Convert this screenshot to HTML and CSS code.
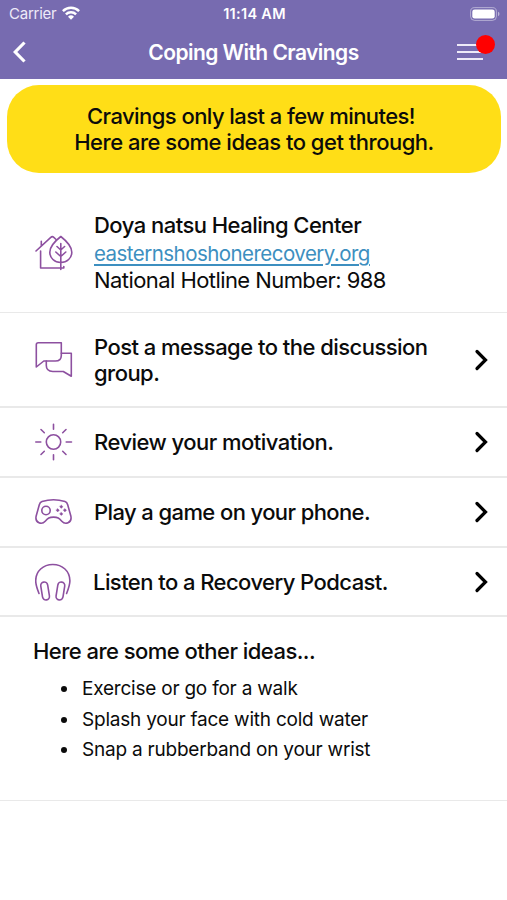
FILE: index.html
```html
<!DOCTYPE html>
<html lang="en">
<head>
    <meta charset="UTF-8">
    <meta name="viewport" content="width=device-width, initial-scale=1.0">
    <title>Coping With Cravings</title>
    <link rel="stylesheet" href="styles.css">
</head>
<body>
    <header class="top">
        <div class="status-bar">
            <div class="carrier">
                <span>Carrier</span>
                <svg class="wifi" width="18" height="14" viewBox="0 0 18 14" fill="none" stroke="#fff" stroke-width="2.5">
                    <path d="M.9 5.1a11.7 11.7 0 0 1 16.2 0M3.9 8.4a7.4 7.4 0 0 1 10.2 0"/>
                    <path d="M9 13.8 6 10.8a4.3 4.3 0 0 1 6 0z" fill="#fff" stroke="none"/>
                </svg>
            </div>
            <div class="time">11:14 AM</div>
            <svg class="battery" width="30" height="14" viewBox="0 0 30 14">
                <rect x=".6" y=".6" width="25.8" height="12.8" rx="4" fill="none" stroke="#fff" stroke-opacity=".45"/>
                <rect x="2.3" y="2.4" width="22.4" height="9.2" rx="2.4" fill="#fff"/>
                <path d="M28 4.8q1.5.6 1.5 2.2T28 9.2z" fill="#fff" fill-opacity=".5"/>
            </svg>
        </div>
        <div class="nav-bar">
            <svg class="back" width="13" height="22" viewBox="0 0 13 22" fill="none" stroke="#fff" stroke-width="3.2">
                <path d="M11.5 1.5 2.2 11l9.3 9.5"/>
            </svg>
            <h1 class="title">Coping With Cravings</h1>
            <div class="menu">
                <span class="menu-line"></span>
                <span class="menu-line"></span>
                <span class="menu-line"></span>
                <span class="menu-dot"></span>
            </div>
        </div>
    </header>

    <div class="banner">
        <div class="banner-first">Cravings only last a few minutes!</div>
        <div class="banner-second">Here are some ideas to get through.</div>
    </div>

    <div class="row row-center">
        <svg class="icon" width="38" height="38" viewBox="0 0 38 38">
            <path d="M1 17 15.8 3.3q1.5-1.4 3 0l2.3 2.2M6.300 11.500V7.200M5.600 17V34h23.200v-1.500"/>
            <path class="leaf" d="M25.8 2.5c-7 5.5-11 9.8-11 15.7 0 5.8 4.7 10.3 11 10.3s11-4.5 11-10.3c0-5.9-4-10.2-11-15.7zM25.8 9.5V35.500M22 12.500l3.800 3.500 3.800-3.500M20.800 18l5 4.500 5-4.500"/>
        </svg>
        <div class="row-text center-info">
            <div class="center-name">Doya natsu Healing Center</div>
            <a class="center-link" href="#">easternshoshonerecovery.org</a>
            <div class="center-phone">National Hotline Number: 988</div>
        </div>
    </div>

    <div class="row row-post">
        <svg class="icon" width="38" height="38" viewBox="0 0 38 38">
            <path d="M1.300 26V3.800q0-2 2-2h23v12.700q0 5.500-6 5.500H8.800z"/>
            <path d="M26.300 12.300h10v23l-8-4.800h-10.500q-6.500-.2-6.500-6v-4.500"/>
        </svg>
        <div class="row-text text-post">Post a message to the discussion<br>group.</div>
        <svg class="chevron" width="14" height="22" viewBox="0 0 14 22"><path d="M3 2.500 11.500 11 3 19.500"/></svg>
    </div>

    <div class="row">
        <svg class="icon" width="38" height="38" viewBox="0 0 38 38">
            <circle cx="18.500" cy="19" r="7.200"/>
            <path d="M18.500 1.200v5M18.500 31.800v5M.8 19h5M31.200 19h5.300M6 6.500l3.300 3.200M27.700 9.700 31 6.500M6 31.500l3.300-3.200M27.700 28.300l3.300 3.200"/>
        </svg>
        <div class="row-text text-review">Review your motivation.</div>
        <svg class="chevron" width="14" height="22" viewBox="0 0 14 22"><path d="M3 2.500 11.500 11 3 19.500"/></svg>
    </div>

    <div class="row">
        <svg class="icon" width="38" height="38" viewBox="0 0 38 38">
            <path d="M7 8.500q11.500-3.400 23 0 2 .6 2.700 3.300l3.200 11.500c1.300 7-5.900 8.500-9.100 4.900-2.800-3.100-4-4.100-8.300-4.100s-5.500 1-8.300 4.100C7 31.800-.2 30.300 1.100 23.300L4.300 11.800Q5 9.100 7 8.500z"/>
            <circle cx="11" cy="17.500" r="4.200"/>
            <path class="pad" d="M26.300 12l1.700 1.700-1.700 1.700-1.700-1.700zM26.300 19.200l1.700 1.700-1.700 1.700-1.700-1.700zM22.700 15.600l1.700 1.700-1.700 1.700-1.700-1.700zM29.900 15.600l1.700 1.700-1.700 1.700-1.700-1.700z"/>
        </svg>
        <div class="row-text text-game">Play a game on your phone.</div>
        <svg class="chevron" width="14" height="22" viewBox="0 0 14 22"><path d="M3 2.500 11.500 11 3 19.500"/></svg>
    </div>

    <div class="row row-podcast">
        <svg class="icon" width="38" height="38" viewBox="0 0 38 38">
            <path d="M4 30.500C2 25.500.7 21.500.7 17.800.7 8 8.200 1.500 17.800 1.500s17.100 6.500 17.100 16.300c0 3.700-1.300 7.700-3.300 12.700"/>
            <rect x="6.600" y="19" width="7" height="18" rx="3.500" transform="rotate(-9 10.100 28)"/>
            <rect x="21.900" y="19" width="7" height="18" rx="3.500" transform="rotate(9 25.400 28)"/>
        </svg>
        <div class="row-text text-podcast">Listen to a Recovery Podcast.</div>
        <svg class="chevron" width="14" height="22" viewBox="0 0 14 22"><path d="M3 2.500 11.500 11 3 19.500"/></svg>
    </div>

    <div class="ideas">
        <h2 class="ideas-title">Here are some other ideas...</h2>
        <ul class="ideas-list">
            <li>Exercise or go for a walk</li>
            <li>Splash your face with cold water</li>
            <li>Snap a rubberband on your wrist</li>
        </ul>
    </div>
</body>
</html>
```
FILE: styles.css
```css
*{
    box-sizing:border-box;
}
body{
    margin:0;
    background-color:#fff;
    color:#0b0b0b;
    font-family:Inter, "Liberation Sans", sans-serif;
    font-size:22px;
    font-weight:500;
    line-height:26px;
    letter-spacing:-0.53px;
}
.top{
    height:79px;
    background-color:#776bb0;
    color:#fff;
}
.status-bar{
    display:grid;
    grid-template-columns:1fr auto 1fr;
    align-items:center;
    height:27px;
    padding:0 7px 0 9px;
    font-size:15px;
    line-height:18px;
}
.carrier{
    display:flex;
    align-items:center;
    gap:6px;
    font-weight:400;
    letter-spacing:-0.25px;
    color:#eeeaf8;
}
.wifi{
    margin-top:-2px;
}
.time{
    font-size:14.5px;
    font-weight:600;
    letter-spacing:0.3px;
}
.battery{
    justify-self:end;
}
.nav-bar{
    display:flex;
    align-items:center;
    justify-content:space-between;
    height:50px;
    padding:0 24px 0 13px;
}
.title{
    margin:0 0 0 13px;
    padding:1px 0 0 11px;
    font-size:21px;
    font-weight:600;
    letter-spacing:-0.55px;
}
.menu{
    position:relative;
    display:flex;
    flex-direction:column;
    gap:5px;
    width:26px;
}
.menu-line{
    height:2px;
    background-color:#eeeaf8;
}
.menu-dot{
    position:absolute;
    top:-9px;
    right:-12px;
    width:19px;
    height:19px;
    border-radius:50%;
    background-color:#ff0000;
}
.banner{
    display:flex;
    flex-direction:column;
    align-items:center;
    justify-content:center;
    height:88px;
    margin:6px 6px 0 7px;
    border-radius:32px;
    background-color:#ffde17;
}
.banner-first{
    margin-right:6px;
    letter-spacing:-0.56px;
}
.banner-second{
    letter-spacing:-0.49px;
}
.row{
    display:flex;
    align-items:center;
    height:70px;
    padding:0 19px 0 35px;
    border-bottom:2px solid #e9e9e9;
}
.row-center{
    height:140px;
    padding-top:20px;
    border-bottom-width:1px;
}
.row-post{
    height:95px;
}
.row-podcast{
    height:69px;
}
.icon{
    flex:none;
    fill:none;
    stroke:#8d50a0;
    stroke-width:1.6;
    stroke-linecap:round;
    stroke-linejoin:round;
}
.leaf{
    fill:#fff;
}
.pad{
    fill:#8d50a0;
    stroke-width:.3;
}
.row-text{
    flex:1;
    margin-left:21px;
    white-space:nowrap;
}
.text-game{
    letter-spacing:-0.6px;
}
.text-podcast{
    margin-left:20px;
    letter-spacing:-0.56px;
}
.center-info{
    display:flex;
    flex-direction:column;
    align-items:flex-start;
    line-height:27px;
}
.center-link{
    color:#3d8fc0;
    font-size:20.5px;
    font-weight:400;
    line-height:29px;
    letter-spacing:-0.54px;
    text-decoration-thickness:2px;
    text-underline-offset:3px;
}
.center-phone{
    font-weight:400;
    line-height:25px;
    letter-spacing:-0.57px;
}
.chevron{
    flex:none;
    fill:none;
    stroke:#000;
    stroke-width:3.2;
    stroke-linecap:round;
}
.ideas{
    height:184px;
    padding:21px 33px 0;
    border-bottom:1px solid #e9e9e9;
}
.ideas-title{
    margin:0;
    font-size:22px;
    font-weight:500;
}
.ideas-list{
    margin:10px 0 0;
    padding-left:47px;
    font-size:19px;
    font-weight:400;
    line-height:30.5px;
    letter-spacing:-0.22px;
}
.ideas-list li{
    padding-left:2px;
}
```
